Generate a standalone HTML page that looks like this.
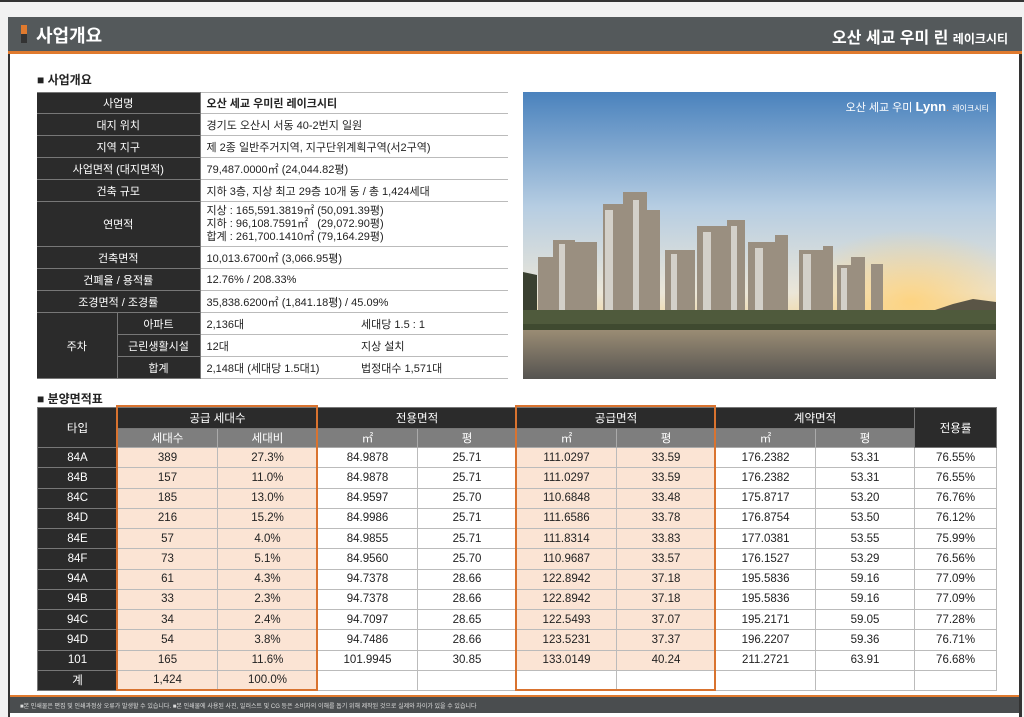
<!DOCTYPE html>
<html><head><meta charset="utf-8"><style>
*{margin:0;padding:0;box-sizing:border-box}
body{width:1024px;height:713px;background:#f2f2f2;position:relative;overflow:hidden;font-family:"Liberation Sans","Noto Sans CJK KR",sans-serif;color:#222}
.top{position:absolute;left:0;top:0;width:1024px;height:2px;background:#333}
.box{position:absolute;left:8px;top:17px;width:1014px;height:700px;background:#fff;border-left:2px solid #333;border-right:3px solid #333}
.hdr{position:absolute;left:8px;top:17px;width:1014px;height:37px;background:#54595b;border-bottom:3px solid #e07a2e}
.hdr .t{position:absolute;left:28px;top:5px;color:#fff;font-size:18px;font-weight:bold}
.hdr .mk{position:absolute;left:13px;top:8px;width:6px;height:18px;background:#333}
.hdr .mk:before{content:"";position:absolute;left:0;top:0;width:6px;height:9px;background:#e07a2e}
.hdr .r{position:absolute;right:14px;top:7px;color:#fff;font-size:16px;font-weight:bold}
.hdr .r small{font-size:12px}
.sec{position:absolute;left:37px;font-size:12px;font-weight:bold}
table{position:absolute;border-collapse:collapse;table-layout:fixed;font-size:11px}
td{text-align:center;border:1px solid #bbb;padding:0;white-space:nowrap;overflow:hidden}
.d{background:#2b2b2b;color:#fff;border-color:#777}
.g{background:#7e7e7e;color:#fff;border-color:#aaa}
.v{text-align:left;padding-left:6px;border-left:1px solid #bbb}
.p{background:#fbe4d4}
#t1 td{border-left:none;border-right:none}
#t1 td.d{border-right:1px solid #777}
#t2 td{font-size:11.5px}
.ob{position:absolute;border:2px solid #d9732f}
.img{position:absolute;left:523px;top:92px;width:473px;height:287px;overflow:hidden}
.foot{position:absolute;left:10px;top:695px;width:1009px;height:18px;background:#4a4d4f;border-top:2px solid #e07a2e;color:#ddd;font-size:6px;padding:4px 0 0 10px;white-space:nowrap;overflow:hidden}
</style></head><body>
<div class="top"></div>
<div class="box"></div>
<div class="hdr"><div class="mk"></div><div class="t">사업개요</div><div class="r">오산 세교 우미 린 <small>레이크시티</small></div></div>
<div class="sec" style="top:71px">■ 사업개요</div>
<table id="t1" style="left:37px;top:92px;width:471px">
<colgroup><col style="width:80px"><col style="width:83px"><col style="width:155px"><col style="width:153px"></colgroup>
<tr style="height:21px"><td class="d" colspan="2">사업명</td><td class="v" colspan="2" style="font-weight:bold">오산 세교 우미린 레이크시티</td></tr>
<tr style="height:22px"><td class="d" colspan="2">대지 위치</td><td class="v" colspan="2">경기도 오산시 서동 40-2번지 일원</td></tr>
<tr style="height:22px"><td class="d" colspan="2">지역 지구</td><td class="v" colspan="2">제 2종 일반주거지역, 지구단위계획구역(서2구역)</td></tr>
<tr style="height:22px"><td class="d" colspan="2">사업면적 (대지면적)</td><td class="v" colspan="2">79,487.0000㎡ (24,044.82평)</td></tr>
<tr style="height:22px"><td class="d" colspan="2">건축 규모</td><td class="v" colspan="2">지하 3층, 지상 최고 29층 10개 동 / 총 1,424세대</td></tr>
<tr style="height:45px"><td class="d" colspan="2">연면적</td><td class="v" colspan="2" style="line-height:13px">지상 : 165,591.3819㎡ (50,091.39평)<br>지하 : 96,108.7591㎡ &nbsp;&nbsp;(29,072.90평)<br>합계 : 261,700.1410㎡ (79,164.29평)</td></tr>
<tr style="height:22px"><td class="d" colspan="2">건축면적</td><td class="v" colspan="2">10,013.6700㎡ (3,066.95평)</td></tr>
<tr style="height:22px"><td class="d" colspan="2">건폐율 / 용적률</td><td class="v" colspan="2">12.76% / 208.33%</td></tr>
<tr style="height:22px"><td class="d" colspan="2">조경면적 / 조경률</td><td class="v" colspan="2">35,838.6200㎡ (1,841.18평) / 45.09%</td></tr>
<tr style="height:22px"><td class="d" rowspan="3">주차</td><td class="d">아파트</td><td class="v">2,136대</td><td class="v">세대당 1.5 : 1</td></tr>
<tr style="height:22px"><td class="d">근린생활시설</td><td class="v">12대</td><td class="v">지상 설치</td></tr>
<tr style="height:22px"><td class="d">합계</td><td class="v">2,148대 (세대당 1.5대1)</td><td class="v">법정대수 1,571대</td></tr>
</table>
<div class="img"><svg width="473" height="287" viewBox="0 0 473 287">
<defs><linearGradient id="sky" x1="0" y1="0" x2="0" y2="1"><stop offset="0" stop-color="#4a82bd"/><stop offset="0.4" stop-color="#b6cde2"/><stop offset="0.7" stop-color="#ebe6d8"/><stop offset="0.8" stop-color="#f1d9a6"/></linearGradient>
<linearGradient id="wt" x1="0" y1="0" x2="0" y2="1"><stop offset="0" stop-color="#9a8c74"/><stop offset="1" stop-color="#555350"/></linearGradient>
<radialGradient id="sun" cx="0.82" cy="0.73" r="0.25"><stop offset="0" stop-color="#ffd27a" stop-opacity="0.9"/><stop offset="1" stop-color="#ffd27a" stop-opacity="0"/></radialGradient></defs>
<rect width="473" height="287" fill="url(#sky)"/><rect width="473" height="287" fill="url(#sun)"/>
<g fill="#9a8f80"><rect x="15" y="165" width="18" height="55"/><rect x="30" y="148" width="22" height="72"/><rect x="52" y="150" width="22" height="70"/><rect x="80" y="112" width="20" height="108"/><rect x="100" y="100" width="24" height="120"/><rect x="124" y="118" width="13" height="102"/><rect x="142" y="158" width="30" height="62"/><rect x="174" y="134" width="40" height="86"/><rect x="204" y="128" width="18" height="92"/><rect x="225" y="150" width="40" height="70"/><rect x="252" y="143" width="13" height="77"/><rect x="276" y="158" width="34" height="62"/><rect x="300" y="154" width="10" height="66"/><rect x="314" y="173" width="22" height="47"/><rect x="328" y="165" width="14" height="55"/><rect x="348" y="172" width="12" height="48"/></g>
<g fill="#dedcd6" opacity="0.85"><rect x="82" y="118" width="8" height="100"/><rect x="110" y="108" width="6" height="110"/><rect x="180" y="140" width="8" height="78"/><rect x="208" y="134" width="6" height="84"/><rect x="232" y="156" width="8" height="62"/><rect x="280" y="162" width="8" height="56"/><rect x="318" y="176" width="6" height="42"/><rect x="36" y="152" width="6" height="66"/><rect x="148" y="162" width="6" height="56"/></g>
<path d="M0 180 L14 183 L14 222 L0 222Z" fill="#3a4030"/>
<path d="M400 222 L430 212 L450 207 L473 210 L473 224Z" fill="#5a5546"/>
<rect x="0" y="218" width="473" height="20" fill="#4f5a3c"/>
<rect x="0" y="232" width="473" height="6" fill="#3f4a30"/>
<rect x="0" y="238" width="473" height="49" fill="url(#wt)"/>
<text x="466" y="19" text-anchor="end" fill="#fff" font-size="11" font-family="Liberation Sans,Noto Sans CJK KR,sans-serif">오산 세교 우미 <tspan font-weight="bold" font-size="13">Lynn</tspan><tspan fill="#e07a2e">.</tspan> <tspan font-size="8">레이크시티</tspan></text>
</svg></div>
<div class="sec" style="top:390px">■ 분양면적표</div>
<table id="t2" style="left:37px;top:407px;width:959px">
<colgroup><col style="width:80px"><col style="width:100px"><col style="width:100px"><col style="width:100px"><col style="width:99px"><col style="width:100px"><col style="width:99px"><col style="width:100px"><col style="width:99px"><col style="width:82px"></colgroup>
<tr style="height:21px"><td class="d" rowspan="2">타입</td><td class="d" colspan="2">공급 세대수</td><td class="d" colspan="2">전용면적</td><td class="d" colspan="2">공급면적</td><td class="d" colspan="2">계약면적</td><td class="d" rowspan="2">전용률</td></tr>
<tr style="height:19px"><td class="g">세대수</td><td class="g">세대비</td><td class="g">㎡</td><td class="g">평</td><td class="g">㎡</td><td class="g">평</td><td class="g">㎡</td><td class="g">평</td></tr>
<tr style="height:20.25px"><td class="d">84A</td><td class="p">389</td><td class="p">27.3%</td><td>84.9878</td><td>25.71</td><td class="p">111.0297</td><td class="p">33.59</td><td>176.2382</td><td>53.31</td><td>76.55%</td></tr>
<tr style="height:20.25px"><td class="d">84B</td><td class="p">157</td><td class="p">11.0%</td><td>84.9878</td><td>25.71</td><td class="p">111.0297</td><td class="p">33.59</td><td>176.2382</td><td>53.31</td><td>76.55%</td></tr>
<tr style="height:20.25px"><td class="d">84C</td><td class="p">185</td><td class="p">13.0%</td><td>84.9597</td><td>25.70</td><td class="p">110.6848</td><td class="p">33.48</td><td>175.8717</td><td>53.20</td><td>76.76%</td></tr>
<tr style="height:20.25px"><td class="d">84D</td><td class="p">216</td><td class="p">15.2%</td><td>84.9986</td><td>25.71</td><td class="p">111.6586</td><td class="p">33.78</td><td>176.8754</td><td>53.50</td><td>76.12%</td></tr>
<tr style="height:20.25px"><td class="d">84E</td><td class="p">57</td><td class="p">4.0%</td><td>84.9855</td><td>25.71</td><td class="p">111.8314</td><td class="p">33.83</td><td>177.0381</td><td>53.55</td><td>75.99%</td></tr>
<tr style="height:20.25px"><td class="d">84F</td><td class="p">73</td><td class="p">5.1%</td><td>84.9560</td><td>25.70</td><td class="p">110.9687</td><td class="p">33.57</td><td>176.1527</td><td>53.29</td><td>76.56%</td></tr>
<tr style="height:20.25px"><td class="d">94A</td><td class="p">61</td><td class="p">4.3%</td><td>94.7378</td><td>28.66</td><td class="p">122.8942</td><td class="p">37.18</td><td>195.5836</td><td>59.16</td><td>77.09%</td></tr>
<tr style="height:20.25px"><td class="d">94B</td><td class="p">33</td><td class="p">2.3%</td><td>94.7378</td><td>28.66</td><td class="p">122.8942</td><td class="p">37.18</td><td>195.5836</td><td>59.16</td><td>77.09%</td></tr>
<tr style="height:20.25px"><td class="d">94C</td><td class="p">34</td><td class="p">2.4%</td><td>94.7097</td><td>28.65</td><td class="p">122.5493</td><td class="p">37.07</td><td>195.2171</td><td>59.05</td><td>77.28%</td></tr>
<tr style="height:20.25px"><td class="d">94D</td><td class="p">54</td><td class="p">3.8%</td><td>94.7486</td><td>28.66</td><td class="p">123.5231</td><td class="p">37.37</td><td>196.2207</td><td>59.36</td><td>76.71%</td></tr>
<tr style="height:20.25px"><td class="d">101</td><td class="p">165</td><td class="p">11.6%</td><td>101.9945</td><td>30.85</td><td class="p">133.0149</td><td class="p">40.24</td><td>211.2721</td><td>63.91</td><td>76.68%</td></tr>
<tr style="height:20.25px"><td class="d">계</td><td class="p">1,424</td><td class="p">100.0%</td><td></td><td></td><td></td><td></td><td></td><td></td><td></td></tr>
</table>
<div class="ob" style="left:116px;top:405px;width:202px;height:286px"></div>
<div class="ob" style="left:515px;top:405px;width:201px;height:286px"></div>
<div class="foot">■본 인쇄물은 편집 및 인쇄과정상 오류가 발생할 수 있습니다. ■본 인쇄물에 사용된 사진, 일러스트 및 CG 등은 소비자의 이해를 돕기 위해 제작된 것으로 실제와 차이가 있을 수 있습니다</div>
</body></html>
